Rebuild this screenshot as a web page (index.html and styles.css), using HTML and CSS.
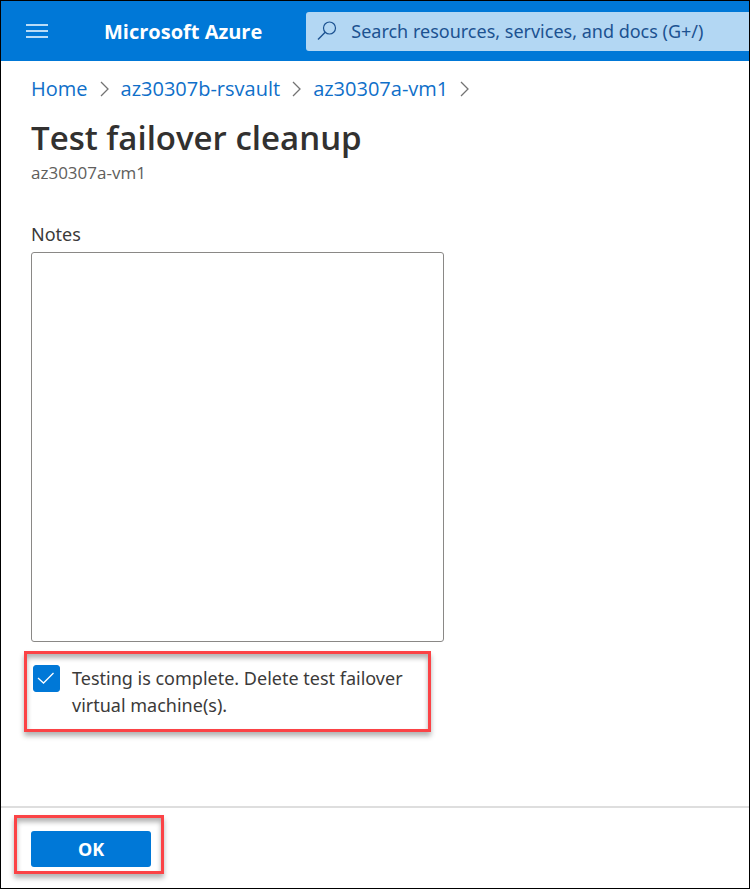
FILE: index.html
```html
<!DOCTYPE html>
<html lang="en">
<head>
<meta charset="utf-8">
<meta name="viewport" content="width=device-width, initial-scale=1">
<title>Test failover cleanup - Microsoft Azure</title>
<link rel="stylesheet" href="styles.css">
</head>
<body>
<header class="topbar">
  <button class="menu-button" type="button" aria-label="Show portal menu">
    <svg width="22" height="16" viewBox="0 0 22 16" aria-hidden="true"><path d="M0 2h22M0 8h22M0 14h22" stroke="#b9dcf7" stroke-width="2"/></svg>
  </button>
  <a class="brand" href="#">Microsoft Azure</a>
  <div class="search">
    <svg width="20" height="20" viewBox="0 0 20 20" aria-hidden="true"><circle cx="12.5" cy="7" r="6" fill="none" stroke="#1c5291" stroke-width="1.2"/><path d="M8.2 11.3L1 18.5" stroke="#1c5291" stroke-width="1.4"/></svg>
    <input class="search-input" type="text" aria-label="Search" placeholder="Search resources, services, and docs (G+/)">
  </div>
</header>
<main class="blade">
  <nav class="breadcrumb" aria-label="Breadcrumb">
    <a href="#">Home</a>
    <svg class="chevron" viewBox="0 0 9 16" aria-hidden="true"><path d="M1 1l7 7-7 7"/></svg>
    <a href="#">az30307b-rsvault</a>
    <svg class="chevron" viewBox="0 0 9 16" aria-hidden="true"><path d="M1 1l7 7-7 7"/></svg>
    <a href="#">az30307a-vm1</a>
    <svg class="chevron" viewBox="0 0 9 16" aria-hidden="true"><path d="M1 1l7 7-7 7"/></svg>
  </nav>
  <h1 class="title">Test failover cleanup</h1>
  <p class="subtitle">az30307a-vm1</p>
  <form class="form" id="cleanup">
    <label class="field-label" for="notes">Notes</label>
    <textarea class="notes" id="notes"></textarea>
    <div class="callout confirm">
      <input class="checkbox" type="checkbox" id="complete" checked>
      <svg class="tick" viewBox="0 0 27 27" aria-hidden="true"><path d="M5 13l5.500 5L20.500 8"/></svg>
      <label class="confirm-label" for="complete">Testing is complete. Delete test failover virtual machine(s).</label>
    </div>
  </form>
</main>
<footer class="actions">
  <div class="callout submit">
    <button class="ok-button" type="submit" form="cleanup">OK</button>
  </div>
</footer>
</body>
</html>
```
FILE: styles.css
```css
* {
  box-sizing: border-box;
}

body {
  display: flex;
  flex-direction: column;
  min-height: 100vh;
  margin: 0;
  border: 1px solid #000;
  background: #fff;
  color: #3b3a39;
  font-family: "Segoe UI", "Noto Sans", sans-serif;
  font-size: 18px;
}

.topbar {
  display: flex;
  align-items: center;
  height: 60px;
  padding-left: 25px;
  background: #0078d7;
}

.menu-button {
  display: flex;
  padding: 0;
  border: 0;
  background: none;
}

.brand {
  margin-left: 56px;
  color: #fff;
  font-family: "Segoe UI", "Open Sans", sans-serif;
  font-size: 20px;
  font-weight: 700;
  text-decoration: none;
  white-space: nowrap;
}

.search {
  display: flex;
  flex: 1;
  align-items: center;
  gap: 14px;
  height: 39px;
  margin-left: 44px;
  padding-left: 11px;
  border-radius: 3px 0 0 3px;
  background: #b3d7f3;
}

.search svg {
  flex: none;
}

.search-input {
  flex: 1;
  min-width: 0;
  padding: 0;
  border: 0;
  background: none;
  color: #1c5291;
  font: inherit;
}

.search-input::placeholder {
  color: #1c5291;
  opacity: 1;
}

.blade {
  flex: 1;
  padding: 14px 30px;
}

.breadcrumb {
  display: flex;
  align-items: center;
  gap: 12px;
  font-family: "Segoe UI", "Open Sans", sans-serif;
  font-size: 20px;
  line-height: 28px;
}

.breadcrumb a {
  color: #0f6fc9;
  text-decoration: none;
}

.chevron {
  width: 9px;
  height: 16px;
  fill: none;
  stroke: #737373;
  stroke-width: 1.3;
}

.title {
  margin: 12px 0 0;
  color: #323130;
  font-family: "Segoe UI", "Open Sans", sans-serif;
  font-size: 33px;
  font-weight: 600;
  line-height: 46px;
}

.subtitle {
  margin: 0;
  color: #605e5c;
  font-family: "Segoe UI", "Open Sans", sans-serif;
  font-size: 17px;
  line-height: 24px;
}

.form {
  max-width: 413px;
  margin-top: 36px;
}

.field-label {
  display: block;
  line-height: 26px;
}

.notes {
  display: block;
  width: 100%;
  height: 390px;
  margin-top: 5px;
  border: 1px solid #8a8886;
  border-radius: 3px;
  font: inherit;
  resize: none;
}

.callout {
  border: 3px solid #fb4346;
  box-shadow: 0 4px 5px rgba(0, 0, 0, .3), inset 0 4px 5px rgba(0, 0, 0, .3);
}

.confirm {
  display: grid;
  grid-template-columns: 27px 1fr;
  gap: 12px;
  align-items: start;
  margin: 9px 13px 0 -7px;
  padding: 11px 6px 10px;
}

.checkbox {
  grid-area: 1 / 1;
  width: 27px;
  height: 27px;
  margin: 0;
  border: 1px solid #0078d7;
  border-radius: 3px;
  appearance: none;
}

.checkbox:checked {
  background: #0078d7;
}

.tick {
  grid-area: 1 / 1;
  width: 27px;
  height: 27px;
  fill: none;
  stroke: #fff;
  stroke-width: 1.3;
  pointer-events: none;
}

.confirm-label {
  line-height: 27px;
}

.actions {
  display: flex;
  padding: 7px 13px 14px;
  border-top: 2px solid #dedede;
}

.submit {
  padding: 13px 10px 4px 14px;
}

.ok-button {
  display: block;
  width: 120px;
  height: 36px;
  padding: 0;
  border: 0;
  border-radius: 3px;
  background: #0078d7;
  color: #fff;
  font: inherit;
  font-weight: 700;
}
```
